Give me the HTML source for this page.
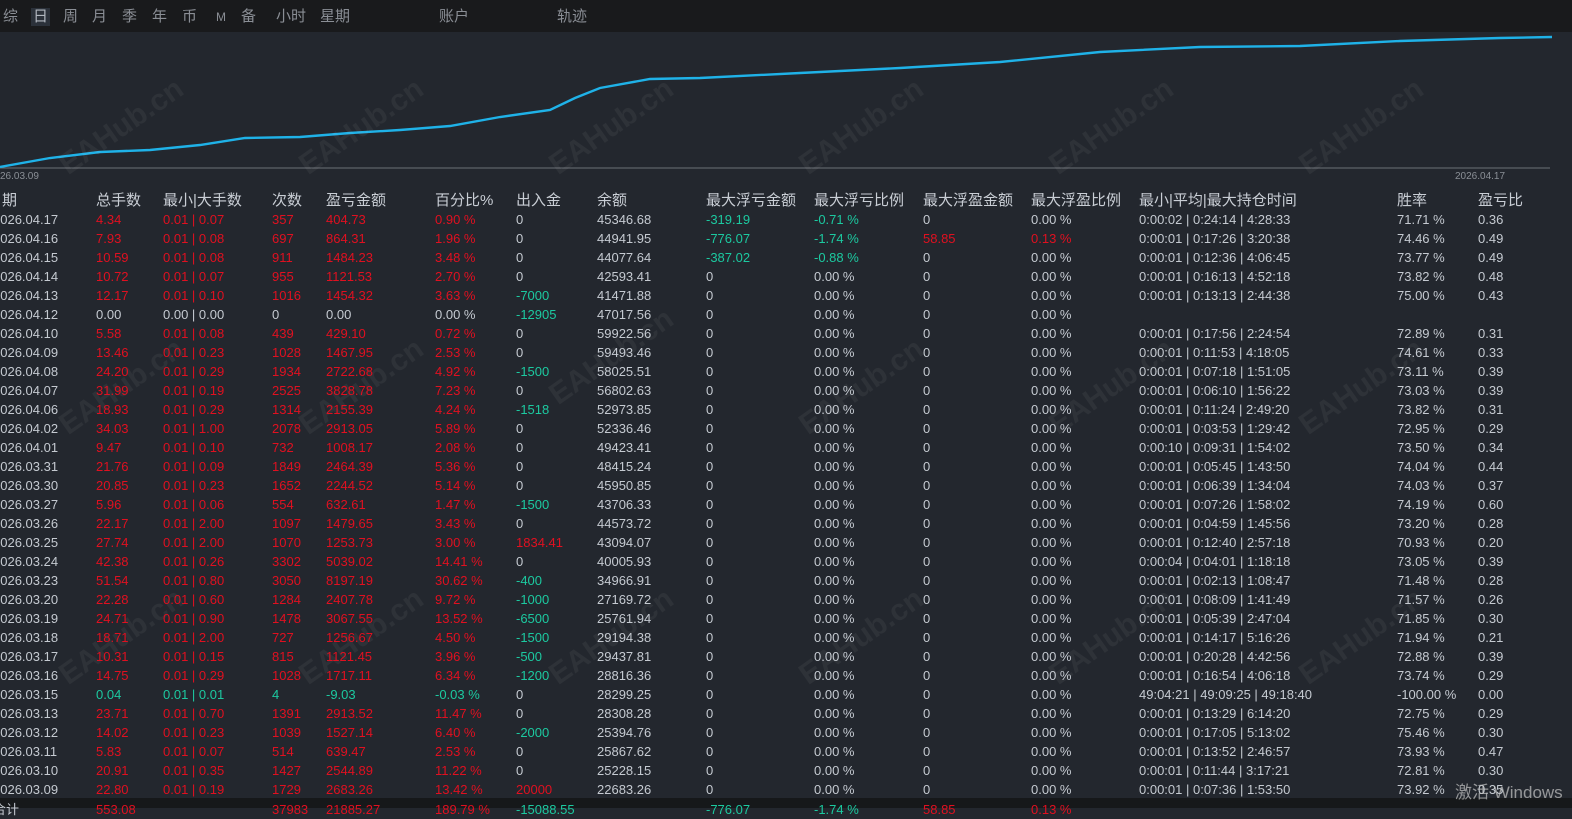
<!DOCTYPE html>
<html><head><meta charset="utf-8"><style>
*{margin:0;padding:0;box-sizing:border-box}
body{width:1572px;height:808px;overflow:hidden;background:#23272e;font-family:"Liberation Sans","Noto Sans CJK SC",sans-serif;position:relative;color:#c5cad1}
.top{position:absolute;left:0;top:0;width:1572px;height:32px;background:#191a1c}
.tab{position:absolute;top:8px;font-size:15px;color:#8a8e95;line-height:18px}
.sel{background:#2b313a;color:#b0b6bf;padding:0 2px}
.r{position:absolute;left:0;height:19px;width:1572px;font-size:13px;line-height:19px;white-space:nowrap}
.r span{position:absolute;top:0}
.r span:nth-child(1){left:-7px}.r span:nth-child(2){left:96px}.r span:nth-child(3){left:163px}
.r span:nth-child(4){left:272px}.r span:nth-child(5){left:326px}.r span:nth-child(6){left:435px}
.r span:nth-child(7){left:516px}.r span:nth-child(8){left:597px}.r span:nth-child(9){left:706px}
.r span:nth-child(10){left:814px}.r span:nth-child(11){left:923px}.r span:nth-child(12){left:1031px}
.r span:nth-child(13){left:1139px}.r span:nth-child(14){left:1397px}.r span:nth-child(15){left:1478px}
.h{font-size:15px;color:#c9ced5}.h span:nth-child(1){left:-13px}
.R{color:#e01020}.G{color:#1cc9a0}
.wm{position:absolute;font-size:30px;color:rgba(255,255,255,0.05);transform:rotate(-35deg);font-weight:bold;white-space:nowrap}
</style></head><body>
<div class="top"></div>
<span class="tab" style="left:3px">综</span><span class="tab sel" style="left:31px">日</span><span class="tab" style="left:63px">周</span><span class="tab" style="left:92px">月</span><span class="tab" style="left:122px">季</span><span class="tab" style="left:152px">年</span><span class="tab" style="left:182px">币</span><span class="tab" style="left:216px;font-size:12px">M</span><span class="tab" style="left:241px">备</span><span class="tab" style="left:276px">小时</span><span class="tab" style="left:320px">星期</span><span class="tab" style="left:439px">账户</span><span class="tab" style="left:557px">轨迹</span>
<svg style="position:absolute;left:0;top:32px" width="1572" height="150">
<line x1="0" y1="136" x2="1550" y2="136" stroke="#6b7077" stroke-width="1"/>
<polyline fill="none" stroke="#1fb2e8" stroke-width="2.4" points="0,135 50,126 100,120 150,118 200,113 245,106 300,105 350,101 400,98 450,94 500,85 550,78 575,66 600,56 650,47 700,46 800,41 900,36 1000,30 1100,20 1200,15 1300,14 1400,9 1500,6 1552,5"/>
</svg>
<div style="position:absolute;left:0;top:171px;font-size:10px;color:#8a8f96">26.03.09</div>
<div style="position:absolute;left:1455px;top:171px;font-size:10px;color:#8a8f96">2026.04.17</div>
<div class="wm" style="left:50px;top:110px">EAHub.cn</div><div class="wm" style="left:290px;top:110px">EAHub.cn</div><div class="wm" style="left:540px;top:110px">EAHub.cn</div><div class="wm" style="left:790px;top:110px">EAHub.cn</div><div class="wm" style="left:1040px;top:110px">EAHub.cn</div><div class="wm" style="left:1290px;top:110px">EAHub.cn</div>
<div class="wm" style="left:50px;top:370px">EAHub.cn</div><div class="wm" style="left:290px;top:370px">EAHub.cn</div><div class="wm" style="left:540px;top:340px">EAHub.cn</div><div class="wm" style="left:790px;top:370px">EAHub.cn</div><div class="wm" style="left:1040px;top:370px">EAHub.cn</div><div class="wm" style="left:1290px;top:370px">EAHub.cn</div>
<div class="wm" style="left:50px;top:620px">EAHub.cn</div><div class="wm" style="left:290px;top:620px">EAHub.cn</div><div class="wm" style="left:540px;top:620px">EAHub.cn</div><div class="wm" style="left:790px;top:620px">EAHub.cn</div><div class="wm" style="left:1040px;top:620px">EAHub.cn</div><div class="wm" style="left:1290px;top:620px">EAHub.cn</div>
<div class="r h" style="top:191px"><span>日期</span><span>总手数</span><span>最小|大手数</span><span>次数</span><span>盈亏金额</span><span>百分比%</span><span>出入金</span><span>余额</span><span>最大浮亏金额</span><span>最大浮亏比例</span><span>最大浮盈金额</span><span>最大浮盈比例</span><span>最小|平均|最大持仓时间</span><span>胜率</span><span>盈亏比</span></div>
<div class="r" style="top:210px"><span>2026.04.17</span><span class="R">4.34</span><span class="R">0.01 | 0.07</span><span class="R">357</span><span class="R">404.73</span><span class="R">0.90 %</span><span>0</span><span>45346.68</span><span class="G">-319.19</span><span class="G">-0.71 %</span><span>0</span><span>0.00 %</span><span>0:00:02 | 0:24:14 | 4:28:33</span><span>71.71 %</span><span>0.36</span></div>
<div class="r" style="top:229px"><span>2026.04.16</span><span class="R">7.93</span><span class="R">0.01 | 0.08</span><span class="R">697</span><span class="R">864.31</span><span class="R">1.96 %</span><span>0</span><span>44941.95</span><span class="G">-776.07</span><span class="G">-1.74 %</span><span class="R">58.85</span><span class="R">0.13 %</span><span>0:00:01 | 0:17:26 | 3:20:38</span><span>74.46 %</span><span>0.49</span></div>
<div class="r" style="top:248px"><span>2026.04.15</span><span class="R">10.59</span><span class="R">0.01 | 0.08</span><span class="R">911</span><span class="R">1484.23</span><span class="R">3.48 %</span><span>0</span><span>44077.64</span><span class="G">-387.02</span><span class="G">-0.88 %</span><span>0</span><span>0.00 %</span><span>0:00:01 | 0:12:36 | 4:06:45</span><span>73.77 %</span><span>0.49</span></div>
<div class="r" style="top:267px"><span>2026.04.14</span><span class="R">10.72</span><span class="R">0.01 | 0.07</span><span class="R">955</span><span class="R">1121.53</span><span class="R">2.70 %</span><span>0</span><span>42593.41</span><span>0</span><span>0.00 %</span><span>0</span><span>0.00 %</span><span>0:00:01 | 0:16:13 | 4:52:18</span><span>73.82 %</span><span>0.48</span></div>
<div class="r" style="top:286px"><span>2026.04.13</span><span class="R">12.17</span><span class="R">0.01 | 0.10</span><span class="R">1016</span><span class="R">1454.32</span><span class="R">3.63 %</span><span class="G">-7000</span><span>41471.88</span><span>0</span><span>0.00 %</span><span>0</span><span>0.00 %</span><span>0:00:01 | 0:13:13 | 2:44:38</span><span>75.00 %</span><span>0.43</span></div>
<div class="r" style="top:305px"><span>2026.04.12</span><span>0.00</span><span>0.00 | 0.00</span><span>0</span><span>0.00</span><span>0.00 %</span><span class="G">-12905</span><span>47017.56</span><span>0</span><span>0.00 %</span><span>0</span><span>0.00 %</span><span></span><span></span><span></span></div>
<div class="r" style="top:324px"><span>2026.04.10</span><span class="R">5.58</span><span class="R">0.01 | 0.08</span><span class="R">439</span><span class="R">429.10</span><span class="R">0.72 %</span><span>0</span><span>59922.56</span><span>0</span><span>0.00 %</span><span>0</span><span>0.00 %</span><span>0:00:01 | 0:17:56 | 2:24:54</span><span>72.89 %</span><span>0.31</span></div>
<div class="r" style="top:343px"><span>2026.04.09</span><span class="R">13.46</span><span class="R">0.01 | 0.23</span><span class="R">1028</span><span class="R">1467.95</span><span class="R">2.53 %</span><span>0</span><span>59493.46</span><span>0</span><span>0.00 %</span><span>0</span><span>0.00 %</span><span>0:00:01 | 0:11:53 | 4:18:05</span><span>74.61 %</span><span>0.33</span></div>
<div class="r" style="top:362px"><span>2026.04.08</span><span class="R">24.20</span><span class="R">0.01 | 0.29</span><span class="R">1934</span><span class="R">2722.68</span><span class="R">4.92 %</span><span class="G">-1500</span><span>58025.51</span><span>0</span><span>0.00 %</span><span>0</span><span>0.00 %</span><span>0:00:01 | 0:07:18 | 1:51:05</span><span>73.11 %</span><span>0.39</span></div>
<div class="r" style="top:381px"><span>2026.04.07</span><span class="R">31.99</span><span class="R">0.01 | 0.19</span><span class="R">2525</span><span class="R">3828.78</span><span class="R">7.23 %</span><span>0</span><span>56802.63</span><span>0</span><span>0.00 %</span><span>0</span><span>0.00 %</span><span>0:00:01 | 0:06:10 | 1:56:22</span><span>73.03 %</span><span>0.39</span></div>
<div class="r" style="top:400px"><span>2026.04.06</span><span class="R">18.93</span><span class="R">0.01 | 0.29</span><span class="R">1314</span><span class="R">2155.39</span><span class="R">4.24 %</span><span class="G">-1518</span><span>52973.85</span><span>0</span><span>0.00 %</span><span>0</span><span>0.00 %</span><span>0:00:01 | 0:11:24 | 2:49:20</span><span>73.82 %</span><span>0.31</span></div>
<div class="r" style="top:419px"><span>2026.04.02</span><span class="R">34.03</span><span class="R">0.01 | 1.00</span><span class="R">2078</span><span class="R">2913.05</span><span class="R">5.89 %</span><span>0</span><span>52336.46</span><span>0</span><span>0.00 %</span><span>0</span><span>0.00 %</span><span>0:00:01 | 0:03:53 | 1:29:42</span><span>72.95 %</span><span>0.29</span></div>
<div class="r" style="top:438px"><span>2026.04.01</span><span class="R">9.47</span><span class="R">0.01 | 0.10</span><span class="R">732</span><span class="R">1008.17</span><span class="R">2.08 %</span><span>0</span><span>49423.41</span><span>0</span><span>0.00 %</span><span>0</span><span>0.00 %</span><span>0:00:10 | 0:09:31 | 1:54:02</span><span>73.50 %</span><span>0.34</span></div>
<div class="r" style="top:457px"><span>2026.03.31</span><span class="R">21.76</span><span class="R">0.01 | 0.09</span><span class="R">1849</span><span class="R">2464.39</span><span class="R">5.36 %</span><span>0</span><span>48415.24</span><span>0</span><span>0.00 %</span><span>0</span><span>0.00 %</span><span>0:00:01 | 0:05:45 | 1:43:50</span><span>74.04 %</span><span>0.44</span></div>
<div class="r" style="top:476px"><span>2026.03.30</span><span class="R">20.85</span><span class="R">0.01 | 0.23</span><span class="R">1652</span><span class="R">2244.52</span><span class="R">5.14 %</span><span>0</span><span>45950.85</span><span>0</span><span>0.00 %</span><span>0</span><span>0.00 %</span><span>0:00:01 | 0:06:39 | 1:34:04</span><span>74.03 %</span><span>0.37</span></div>
<div class="r" style="top:495px"><span>2026.03.27</span><span class="R">5.96</span><span class="R">0.01 | 0.06</span><span class="R">554</span><span class="R">632.61</span><span class="R">1.47 %</span><span class="G">-1500</span><span>43706.33</span><span>0</span><span>0.00 %</span><span>0</span><span>0.00 %</span><span>0:00:01 | 0:07:26 | 1:58:02</span><span>74.19 %</span><span>0.60</span></div>
<div class="r" style="top:514px"><span>2026.03.26</span><span class="R">22.17</span><span class="R">0.01 | 2.00</span><span class="R">1097</span><span class="R">1479.65</span><span class="R">3.43 %</span><span>0</span><span>44573.72</span><span>0</span><span>0.00 %</span><span>0</span><span>0.00 %</span><span>0:00:01 | 0:04:59 | 1:45:56</span><span>73.20 %</span><span>0.28</span></div>
<div class="r" style="top:533px"><span>2026.03.25</span><span class="R">27.74</span><span class="R">0.01 | 2.00</span><span class="R">1070</span><span class="R">1253.73</span><span class="R">3.00 %</span><span class="R">1834.41</span><span>43094.07</span><span>0</span><span>0.00 %</span><span>0</span><span>0.00 %</span><span>0:00:01 | 0:12:40 | 2:57:18</span><span>70.93 %</span><span>0.20</span></div>
<div class="r" style="top:552px"><span>2026.03.24</span><span class="R">42.38</span><span class="R">0.01 | 0.26</span><span class="R">3302</span><span class="R">5039.02</span><span class="R">14.41 %</span><span>0</span><span>40005.93</span><span>0</span><span>0.00 %</span><span>0</span><span>0.00 %</span><span>0:00:04 | 0:04:01 | 1:18:18</span><span>73.05 %</span><span>0.39</span></div>
<div class="r" style="top:571px"><span>2026.03.23</span><span class="R">51.54</span><span class="R">0.01 | 0.80</span><span class="R">3050</span><span class="R">8197.19</span><span class="R">30.62 %</span><span class="G">-400</span><span>34966.91</span><span>0</span><span>0.00 %</span><span>0</span><span>0.00 %</span><span>0:00:01 | 0:02:13 | 1:08:47</span><span>71.48 %</span><span>0.28</span></div>
<div class="r" style="top:590px"><span>2026.03.20</span><span class="R">22.28</span><span class="R">0.01 | 0.60</span><span class="R">1284</span><span class="R">2407.78</span><span class="R">9.72 %</span><span class="G">-1000</span><span>27169.72</span><span>0</span><span>0.00 %</span><span>0</span><span>0.00 %</span><span>0:00:01 | 0:08:09 | 1:41:49</span><span>71.57 %</span><span>0.26</span></div>
<div class="r" style="top:609px"><span>2026.03.19</span><span class="R">24.71</span><span class="R">0.01 | 0.90</span><span class="R">1478</span><span class="R">3067.55</span><span class="R">13.52 %</span><span class="G">-6500</span><span>25761.94</span><span>0</span><span>0.00 %</span><span>0</span><span>0.00 %</span><span>0:00:01 | 0:05:39 | 2:47:04</span><span>71.85 %</span><span>0.30</span></div>
<div class="r" style="top:628px"><span>2026.03.18</span><span class="R">18.71</span><span class="R">0.01 | 2.00</span><span class="R">727</span><span class="R">1256.67</span><span class="R">4.50 %</span><span class="G">-1500</span><span>29194.38</span><span>0</span><span>0.00 %</span><span>0</span><span>0.00 %</span><span>0:00:01 | 0:14:17 | 5:16:26</span><span>71.94 %</span><span>0.21</span></div>
<div class="r" style="top:647px"><span>2026.03.17</span><span class="R">10.31</span><span class="R">0.01 | 0.15</span><span class="R">815</span><span class="R">1121.45</span><span class="R">3.96 %</span><span class="G">-500</span><span>29437.81</span><span>0</span><span>0.00 %</span><span>0</span><span>0.00 %</span><span>0:00:01 | 0:20:28 | 4:42:56</span><span>72.88 %</span><span>0.39</span></div>
<div class="r" style="top:666px"><span>2026.03.16</span><span class="R">14.75</span><span class="R">0.01 | 0.29</span><span class="R">1028</span><span class="R">1717.11</span><span class="R">6.34 %</span><span class="G">-1200</span><span>28816.36</span><span>0</span><span>0.00 %</span><span>0</span><span>0.00 %</span><span>0:00:01 | 0:16:54 | 4:06:18</span><span>73.74 %</span><span>0.29</span></div>
<div class="r" style="top:685px"><span>2026.03.15</span><span class="G">0.04</span><span class="G">0.01 | 0.01</span><span class="G">4</span><span class="G">-9.03</span><span class="G">-0.03 %</span><span>0</span><span>28299.25</span><span>0</span><span>0.00 %</span><span>0</span><span>0.00 %</span><span>49:04:21 | 49:09:25 | 49:18:40</span><span>-100.00 %</span><span>0.00</span></div>
<div class="r" style="top:704px"><span>2026.03.13</span><span class="R">23.71</span><span class="R">0.01 | 0.70</span><span class="R">1391</span><span class="R">2913.52</span><span class="R">11.47 %</span><span>0</span><span>28308.28</span><span>0</span><span>0.00 %</span><span>0</span><span>0.00 %</span><span>0:00:01 | 0:13:29 | 6:14:20</span><span>72.75 %</span><span>0.29</span></div>
<div class="r" style="top:723px"><span>2026.03.12</span><span class="R">14.02</span><span class="R">0.01 | 0.23</span><span class="R">1039</span><span class="R">1527.14</span><span class="R">6.40 %</span><span class="G">-2000</span><span>25394.76</span><span>0</span><span>0.00 %</span><span>0</span><span>0.00 %</span><span>0:00:01 | 0:17:05 | 5:13:02</span><span>75.46 %</span><span>0.30</span></div>
<div class="r" style="top:742px"><span>2026.03.11</span><span class="R">5.83</span><span class="R">0.01 | 0.07</span><span class="R">514</span><span class="R">639.47</span><span class="R">2.53 %</span><span>0</span><span>25867.62</span><span>0</span><span>0.00 %</span><span>0</span><span>0.00 %</span><span>0:00:01 | 0:13:52 | 2:46:57</span><span>73.93 %</span><span>0.47</span></div>
<div class="r" style="top:761px"><span>2026.03.10</span><span class="R">20.91</span><span class="R">0.01 | 0.35</span><span class="R">1427</span><span class="R">2544.89</span><span class="R">11.22 %</span><span>0</span><span>25228.15</span><span>0</span><span>0.00 %</span><span>0</span><span>0.00 %</span><span>0:00:01 | 0:11:44 | 3:17:21</span><span>72.81 %</span><span>0.30</span></div>
<div class="r" style="top:780px"><span>2026.03.09</span><span class="R">22.80</span><span class="R">0.01 | 0.19</span><span class="R">1729</span><span class="R">2683.26</span><span class="R">13.42 %</span><span class="R">20000</span><span>22683.26</span><span>0</span><span>0.00 %</span><span>0</span><span>0.00 %</span><span>0:00:01 | 0:07:36 | 1:53:50</span><span>73.92 %</span><span>0.35</span></div>
<div style="position:absolute;left:0;top:798px;width:1572px;height:10px;background:#16181a"></div>
<div class="r" style="top:800px"><span>合计</span><span class="R">553.08</span><span></span><span class="R">37983</span><span class="R">21885.27</span><span class="R">189.79 %</span><span class="G">-15088.55</span><span></span><span class="G">-776.07</span><span class="G">-1.74 %</span><span class="R">58.85</span><span class="R">0.13 %</span></div>
<div style="position:absolute;left:1455px;top:778px;font-size:17px;color:rgba(200,200,200,0.7)">激活 Windows</div>
</body></html>
